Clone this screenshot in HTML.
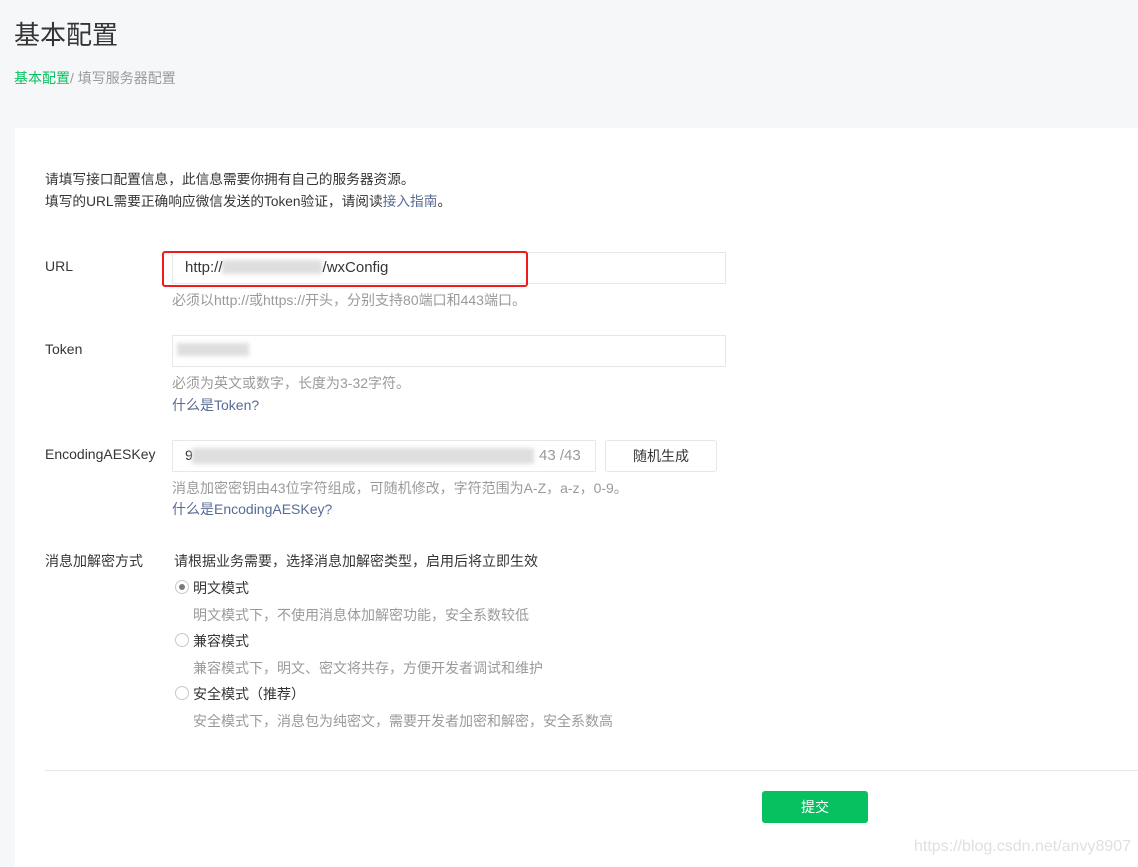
<!DOCTYPE html>
<html><head><meta charset="utf-8"><style>
*{margin:0;padding:0;box-sizing:border-box}
body{width:1138px;height:867px;background:#f6f7f9;font-family:"Liberation Sans","Noto Sans CJK SC",sans-serif;position:relative;overflow:hidden;color:#353535}
.a{position:absolute;white-space:nowrap}
.card{position:absolute;left:15px;top:128px;width:1123px;height:739px;background:#fff}
.t{font-size:14px}
.g{color:#9a9a9a;font-size:14px}
.l{color:#576b95;font-size:14px}
.in{position:absolute;border:1px solid #e4e8eb;background:#fff;height:32px}
.blur{position:absolute;background:#d6d6d6;filter:blur(2px);opacity:.8}
.r{position:absolute;width:14px;height:14px;border:1px solid #c8c8c8;border-radius:50%;background:#fff}
</style></head><body>
<div class="a" style="left:14px;top:15px;font-size:26px;color:#353535">基本配置</div>
<div class="a" style="left:14px;top:68px;font-size:14px;color:#9a9a9a"><span style="color:#07c160">基本配置</span>/ 填写服务器配置</div>
<div class="card"></div>
<div class="a t" style="left:45px;top:169px;line-height:22px;font-size:13.7px">请填写接口配置信息，此信息需要你拥有自己的服务器资源。<br>填写的URL需要正确响应微信发送的Token验证，请阅读<span style="color:#576b95">接入指南</span>。</div>

<div class="a t" style="left:45px;top:258px">URL</div>
<div class="in" style="left:172px;top:252px;width:554px"></div>
<div class="blur" style="left:222px;top:260px;width:100px;height:14px"></div>
<div class="a t" style="left:185px;top:259px;font-size:15px">http://<span style="display:inline-block;width:100px"></span>/wxConfig</div>
<div style="position:absolute;left:162px;top:251px;width:366px;height:36px;border:2px solid #f01c1c;border-radius:3px"></div>
<div class="a g" style="left:172px;top:290px">必须以http://或https://开头，分别支持80端口和443端口。</div>

<div class="a t" style="left:45px;top:341px">Token</div>
<div class="in" style="left:172px;top:335px;width:554px"></div>
<div class="blur" style="left:177px;top:343px;width:72px;height:13px"></div>
<div class="a g" style="left:172px;top:373px">必须为英文或数字，长度为3-32字符。</div>
<div class="a l" style="left:172px;top:395px">什么是Token?</div>

<div class="a t" style="left:45px;top:446px">EncodingAESKey</div>
<div class="in" style="left:172px;top:440px;width:424px"></div>
<div class="a t" style="left:185px;top:447px">9</div>
<div class="blur" style="left:192px;top:448px;width:342px;height:16px"></div>
<div class="a g" style="left:539px;top:447px;font-size:15px">43 /43</div>
<div style="position:absolute;left:605px;top:440px;width:112px;height:32px;border:1px solid #e4e8eb;border-radius:3px;text-align:center;line-height:30px;font-size:14px">随机生成</div>
<div class="a g" style="left:172px;top:478px">消息加密密钥由43位字符组成，可随机修改，字符范围为A-Z，a-z，0-9。</div>
<div class="a l" style="left:172px;top:499px">什么是EncodingAESKey?</div>

<div class="a t" style="left:45px;top:551px">消息加解密方式</div>
<div class="a t" style="left:174px;top:551px">请根据业务需要，选择消息加解密类型，启用后将立即生效</div>
<div class="r" style="left:175px;top:580px"><div style="position:absolute;left:3px;top:3px;width:6px;height:6px;border-radius:50%;background:#7a7a7a"></div></div>
<div class="a t" style="left:193px;top:578px">明文模式</div>
<div class="a g" style="left:193px;top:605px">明文模式下，不使用消息体加解密功能，安全系数较低</div>
<div class="r" style="left:175px;top:633px"></div>
<div class="a t" style="left:193px;top:631px">兼容模式</div>
<div class="a g" style="left:193px;top:658px">兼容模式下，明文、密文将共存，方便开发者调试和维护</div>
<div class="r" style="left:175px;top:686px"></div>
<div class="a t" style="left:193px;top:684px">安全模式（推荐）</div>
<div class="a g" style="left:193px;top:711px">安全模式下，消息包为纯密文，需要开发者加密和解密，安全系数高</div>

<div style="position:absolute;left:45px;top:770px;width:1093px;height:1px;background:#e7e7eb"></div>
<div style="position:absolute;left:762px;top:791px;width:106px;height:32px;background:#07c160;border-radius:3px;color:#fff;text-align:center;line-height:32px;font-size:14px">提交</div>
<div class="a" style="left:914px;top:838px;font-size:16px;color:#e0e0e0">https://blog.csdn.net/anvy8907</div>
</body></html>
